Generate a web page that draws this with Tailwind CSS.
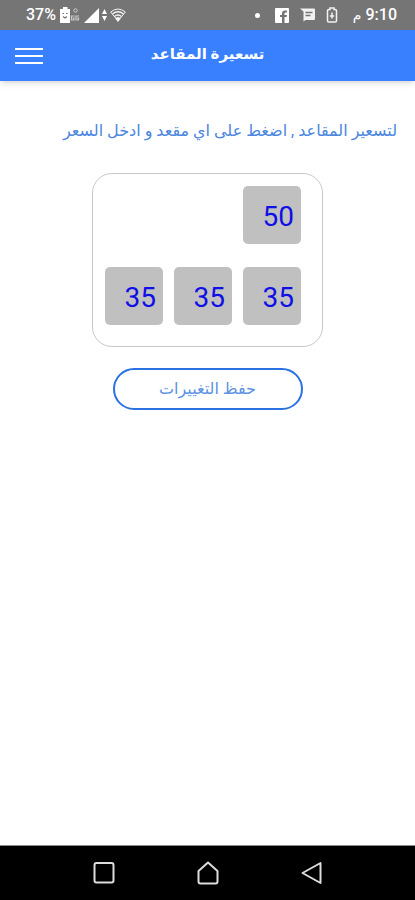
<!DOCTYPE html>
<html lang="ar" dir="rtl">
<head>
<meta charset="utf-8">
<meta name="viewport" content="width=device-width, initial-scale=1">
<title>تسعيرة المقاعد</title>
<script src="https://cdn.jsdelivr.net/npm/@tailwindcss/browser@4"></script>
</head>
<body class="flex min-h-screen flex-col bg-white font-[Roboto,'DejaVu_Sans',sans-serif]">
  <!-- Status bar -->
  <div class="flex h-[30px] items-center justify-between bg-[#757575] px-[18px] text-base font-medium text-white">
    <div class="flex items-center gap-[11px]">
      <div class="flex items-center gap-1"><span dir="ltr">9:10</span><span class="text-sm font-normal">م</span></div>
      <svg class="ms-1 h-4 w-3" viewBox="0 0 12 16" fill="none" stroke="#f2f2f2" stroke-width="1.5"><path d="M4 2.500V1h4v1.500h1.200a1.300 1.300 0 0 1 1.300 1.300v9.900a1.300 1.300 0 0 1-1.300 1.300H2.800a1.300 1.300 0 0 1-1.300-1.300V3.800a1.300 1.300 0 0 1 1.300-1.300z"/><path d="M6 5.500v6M3.800 9h4.400"/></svg>
      <svg class="h-[14px] w-[15px]" viewBox="0 0 15 14"><path fill="#f2f2f2" d="M0 .5h14a1 1 0 0 1 1 1v9.500a1 1 0 0 1-1 1H5.500l-2 1.500V3.500z"/><path stroke="#757575" stroke-width="1.300" d="M5.500 4.500h7M5.500 7.500h5"/></svg>
      <svg class="h-[15px] w-[14px]" viewBox="0 0 14 15"><rect width="14" height="15" rx="1" fill="#fff"/><path fill="#757575" d="M7 15V9H5V7h2V5.500Q7 2.500 10 2.500h2v2h-1.500Q9.500 4.500 9.500 5.500V7H12l-.4 2H9.500v6z"/></svg>
      <span class="ms-1 size-[5px] rounded-full bg-white"></span>
    </div>
    <div class="flex items-center gap-[3px] ps-2" dir="ltr">
      <span>37%</span>
      <svg class="h-4 w-[22px]" viewBox="0 0 22 16"><path fill="#fff" d="M4 0h4.500v2H11v14H1V2h3z"/><path fill="none" stroke="#757575" stroke-width="1.200" d="M3.500 6.500H5M7 6.500h1.500M4 9.500 6 11l2-1.500"/><g fill="none" stroke="#c9c9c9"><circle cx="16.500" cy="3.500" r="1.700"/><path d="M15.500 9h-3v4H15v-2h-1.500M20 9h-3v4h2.500v-2H18" stroke-width="1.200"/></g></svg>
      <svg class="h-[15px] w-[15px]" viewBox="0 0 15 15"><path fill="#fff" d="M15 0v15H0z"/></svg>
      <svg class="h-3 w-[5px]" viewBox="0 0 5 12"><path fill="#fff" d="M2.500 0 5 5H0zM2.500 12 5 7H0z"/></svg>
      <svg class="h-[14px] w-4" viewBox="0 0 16 14" fill="none" stroke="#f2f2f2" stroke-width="1.300"><path d="M.7 4Q8-2 15.300 4L8 13z" stroke-width="1"/><path d="M2.500 6Q8 1.500 13.500 6M4.500 8.500Q8 5.500 11.500 8.500"/><path fill="#fff" d="M6.200 10.500Q8 9 9.800 10.500L8 13z"/></svg>
    </div>
  </div>

  <!-- Title bar -->
  <header class="grid h-[51px] grid-cols-[1fr_auto_1fr] items-center bg-[#3880ff] px-[15px] shadow-md">
    <h1 class="col-start-2 pb-[2px] text-[15px] font-bold text-white">تسعيرة المقاعد</h1>
    <button type="button" aria-label="القائمة" class="flex w-7 flex-col gap-[5px] justify-self-end">
      <span class="h-[2px] w-full bg-white"></span>
      <span class="h-[2px] w-full bg-white"></span>
      <span class="h-[2px] w-full bg-white"></span>
    </button>
  </header>

  <main class="flex grow flex-col items-center pt-[38px]">
    <p class="w-full px-[18px] text-base leading-6 text-[#4a86e0]">لتسعير المقاعد , اضغط على اي مقعد و ادخل السعر</p>

    <div class="mt-[30px] grid grid-cols-3 gap-x-[11px] gap-y-[23px] rounded-[20px] border border-[#c8c8c8] pt-3 pr-[21px] pb-[21px] pl-3 text-[28px] text-[#0f0fe6]">
      <button type="button" class="col-span-3 size-[58px] rounded-[5px] bg-[#c0c0c0] pt-1 pr-[7px] text-right">50</button>
      <button type="button" class="size-[58px] rounded-[5px] bg-[#c0c0c0] pt-1 pr-[7px] text-right">35</button>
      <button type="button" class="size-[58px] rounded-[5px] bg-[#c0c0c0] pt-1 pr-[7px] text-right">35</button>
      <button type="button" class="size-[58px] rounded-[5px] bg-[#c0c0c0] pt-1 pr-[7px] text-right">35</button>
    </div>

    <button type="button" class="mt-[21px] h-[42px] w-[190px] rounded-full border-2 border-[#2a72e2] text-base text-[#5c92e4]">حفظ التغييرات</button>
  </main>

  <!-- System navigation -->
  <nav class="flex h-[55px] items-center justify-center gap-20 border-t border-[#8a8a8a] bg-black">
    <button type="button" aria-label="رجوع"><svg class="size-6" viewBox="0 0 24 24" fill="none" stroke="#dcdcdc" stroke-width="2" stroke-linejoin="round"><path d="M20.500 2v20L2.500 12z"/></svg></button>
    <button type="button" aria-label="الرئيسية"><svg class="size-6" viewBox="0 0 24 24" fill="none" stroke="#dcdcdc" stroke-width="2" stroke-linejoin="round"><path d="M12 1.500 21.500 10v10.500a2 2 0 0 1-2 2h-15a2 2 0 0 1-2-2V10z"/></svg></button>
    <button type="button" aria-label="التطبيقات الأخيرة"><svg class="size-6" viewBox="0 0 24 24" fill="none" stroke="#dcdcdc" stroke-width="2"><rect x="2.500" y="2" width="19" height="19.500" rx="2"/></svg></button>
  </nav>
</body>
</html>
